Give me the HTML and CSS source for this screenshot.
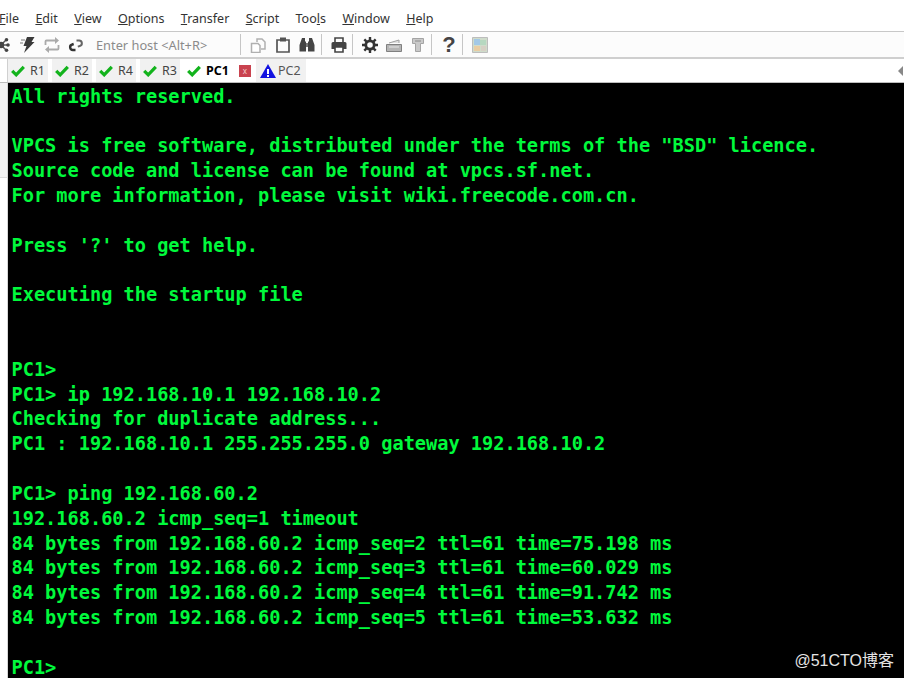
FILE: index.html
```html
<!DOCTYPE html>
<html lang="en">
<head>
<meta charset="utf-8">
<title>SecureCRT</title>
<link rel="stylesheet" href="styles.css">
</head>
<body>
<div class="app">
  <nav class="menubar">
    <span class="menu first"><u>F</u>ile</span>
    <span class="menu"><u>E</u>dit</span>
    <span class="menu"><u>V</u>iew</span>
    <span class="menu"><u>O</u>ptions</span>
    <span class="menu"><u>T</u>ransfer</span>
    <span class="menu"><u>S</u>cript</span>
    <span class="menu">Too<u>l</u>s</span>
    <span class="menu"><u>W</u>indow</span>
    <span class="menu"><u>H</u>elp</span>
  </nav>
  <div class="toolbar">
    <span class="tool tool-first"><svg class="ic" viewBox="0 0 16 16"><path d="M5 8h7M5 8l5-5M5 8l5 5" stroke="#555" stroke-width="1.500" fill="none"/><circle cx="5" cy="8" r="3.200" fill="#444"/><circle cx="10.500" cy="2.800" r="1.800" fill="#444"/><circle cx="12" cy="8" r="1.800" fill="#444"/><circle cx="10.500" cy="13.200" r="1.800" fill="#444"/></svg></span>
    <span class="tool"><svg class="ic" viewBox="0 0 16 16"><path d="M7 0h7.500l-3 5h3L4 16l2.500-7H3.500z" fill="#3a3a3a"/><path d="M1 3h4M0 6h3" stroke="#777"/></svg></span>
    <span class="tool"><svg class="ic ic-wide" viewBox="0 0 18 16"><path d="M2.500 8V4.500q0-1 1-1H13M15.500 8v3.500q0 1-1 1H5" fill="none" stroke="#aaa" stroke-width="1.800"/><path d="M12 0l4 3.500L12 7zM6 9l-4 3.500L6 16z" fill="#aaa"/></svg></span>
    <span class="tool"><svg class="ic" viewBox="0 0 16 16"><path d="M8.500 3.500H11a2.800 2.800 0 0 1 .8 5.500l-2 .6" fill="none" stroke="#666" stroke-width="2"/><path d="M7.500 13H5a2.800 2.800 0 0 1-.8-5.500l1.500-.5" fill="none" stroke="#333" stroke-width="2.400"/></svg></span>
    <span class="host">Enter host &lt;Alt+R&gt;</span>
    <i class="sep sep-host"></i>
    <span class="tool"><svg class="ic" viewBox="0 0 16 16"><path d="M7 5V2h5l3 3v7h-4" fill="none" stroke="#b0b0b0" stroke-width="1.500"/><path d="M1.500 6.500H8l2 2v7H1.500z" fill="#fff" stroke="#b0b0b0" stroke-width="1.500"/></svg></span>
    <span class="tool tool-paste"><svg class="ic" viewBox="0 0 16 16"><path d="M2 3h12v12H2z" fill="none" stroke="#555" stroke-width="1.700"/><path d="M5 .5h6v4H5z" fill="#555"/></svg></span>
    <span class="tool tool-find"><svg class="ic" viewBox="0 0 16 16"><path d="M3 1h3v3l1 1v9.500H.5V8zM10 1h3l2.500 7v6.500H9V5l1-1z" fill="#444"/><path d="M7 6h2v4H7z" fill="#777"/></svg></span>
    <i class="sep"></i>
    <span class="tool"><svg class="ic" viewBox="0 0 16 16"><path d="M4 5V1h8v4" fill="none" stroke="#444" stroke-width="1.600"/><path d="M2 5h12q1.500 0 1.500 1.500V12H12v-2H4v2H.5V6.500Q.5 5 2 5z" fill="#444"/><path d="M4 10h8v5H4z" fill="#fff" stroke="#444" stroke-width="1.600"/></svg></span>
    <i class="sep"></i>
    <span class="tool"><svg class="ic" viewBox="0 0 16 16"><circle cx="8" cy="8" r="4.200" fill="none" stroke="#333" stroke-width="2.800"/><path d="M8 0v3M8 13v3M0 8h3M13 8h3M2.300 2.300l2 2M11.700 11.700l2 2M13.700 2.300l-2 2M4.300 11.700l-2 2" stroke="#333" stroke-width="2.400"/></svg></span>
    <span class="tool"><svg class="ic" viewBox="0 0 16 16"><path d="M.5 7.500h15v7H.5z" fill="#b5b5b5" stroke="#808080"/><path d="M3 6l10-3v3" fill="#e2e2e2" stroke="#a0a0a0"/><path d="M3 10h10" stroke="#e8e8e8"/></svg></span>
    <span class="tool"><svg class="ic ic-narrow" viewBox="0 0 14 16"><path d="M1.500 1.500h11v5h-3v8h-5v-8h-3z" fill="#c9c9c9" stroke="#a4a4a4"/><path d="M4 4h6" stroke="#8c8c8c"/></svg></span>
    <i class="sep"></i>
    <span class="tool help">?</span>
    <i class="sep"></i>
    <span class="tool"><svg class="ic" viewBox="0 0 16 16"><path d="M.5.5h15v15H.5z" fill="#cfdccb" stroke="#bdbdbd"/><path d="M2 2h6v6H2z" fill="#a3c8e6"/><path d="M8 3h6v5H8z" fill="#b6d8c0"/><path d="M2 9h6v5H2z" fill="#e9cda3"/><path d="M9 9h5v5H9z" fill="#d6d0c4"/></svg></span>
  </div>
  <div class="tabbar">
    <i class="tab-edge"></i>
    <div class="tab"><svg class="tick" viewBox="0 0 14 12"><path d="M1.200 5.800l4 4L12.800 1.800" fill="none" stroke="#12b31c" stroke-width="3.200"/></svg>R1</div>
    <div class="tab"><svg class="tick" viewBox="0 0 14 12"><path d="M1.200 5.800l4 4L12.800 1.800" fill="none" stroke="#12b31c" stroke-width="3.200"/></svg>R2</div>
    <div class="tab"><svg class="tick" viewBox="0 0 14 12"><path d="M1.200 5.800l4 4L12.800 1.800" fill="none" stroke="#12b31c" stroke-width="3.200"/></svg>R4</div>
    <div class="tab"><svg class="tick" viewBox="0 0 14 12"><path d="M1.200 5.800l4 4L12.800 1.800" fill="none" stroke="#12b31c" stroke-width="3.200"/></svg>R3</div>
    <div class="tab active"><svg class="tick" viewBox="0 0 14 12"><path d="M1.200 5.800l4 4L12.800 1.800" fill="none" stroke="#12b31c" stroke-width="3.200"/></svg>PC1<span class="close">x</span></div>
    <div class="tab warn"><svg class="tri" viewBox="0 0 16 14"><path d="M8 0l8 14H0z" fill="#1212e0"/><path d="M7 5h2v5H7zM7 11h2v2H7z" fill="#fff"/></svg>PC2</div>
    <svg class="scroll" viewBox="0 0 6 10"><path d="M5 0v10L0 5z" fill="#888"/></svg>
  </div>
  <div class="body">
    <div class="rail"><div class="rail-top"></div></div>
    <main class="terminal">
      <pre class="output">All rights reserved.

VPCS is free software, distributed under the terms of the "BSD" licence.
Source code and license can be found at vpcs.sf.net.
For more information, please visit wiki.freecode.com.cn.

Press '?' to get help.

Executing the startup file


PC1&gt;
PC1&gt; ip 192.168.10.1 192.168.10.2
Checking for duplicate address...
PC1 : 192.168.10.1 255.255.255.0 gateway 192.168.10.2

PC1&gt; ping 192.168.60.2
192.168.60.2 icmp_seq=1 timeout
84 bytes from 192.168.60.2 icmp_seq=2 ttl=61 time=75.198 ms
84 bytes from 192.168.60.2 icmp_seq=3 ttl=61 time=60.029 ms
84 bytes from 192.168.60.2 icmp_seq=4 ttl=61 time=91.742 ms
84 bytes from 192.168.60.2 icmp_seq=5 ttl=61 time=53.632 ms

PC1&gt;</pre>
      <span class="mark">@51CTO博客</span>
    </main>
  </div>
</div>
</body>
</html>
```
FILE: styles.css
```css
html, body {
  margin: 0;
  padding: 0;
  height: 678px;
  overflow: hidden;
  background: #fff;
}
.app {
  display: flex;
  flex-direction: column;
  height: 678px;
  font-family: "Noto Sans", "Liberation Sans", sans-serif;
  font-size: 12.500px;
}
.menubar {
  display: flex;
  flex: none;
  height: 32px;
  box-sizing: border-box;
  align-items: center;
  padding: 6px 0 0 0;
  gap: 16.400px;
  color: #333;
  border-bottom: 1px solid #c8c8c8;
}
.menu u { text-decoration-thickness: 1px; }
.menu.first { margin-left: -1px; }
.toolbar {
  display: flex;
  flex: none;
  align-items: center;
  height: 27px;
  box-sizing: border-box;
  border-bottom: 2px solid #cfcfcf;
  background: #fcfcfc;
}
.tool {
  display: flex;
  flex: none;
  align-items: center;
  justify-content: center;
  width: 24px;
  height: 20px;
}
.tool-first { margin-left: -8px; }
.tool-paste { margin-left: 1px; }
.tool-find { margin-right: 2px; }
.ic { flex: none; width: 16px; height: 16px; }
.ic-wide { width: 18px; }
.ic-narrow { width: 14px; }
.host {
  flex: none;
  margin-left: 8px;
  width: 144px;
  color: #8b8b8b;
  font-size: 12.800px;
  white-space: nowrap;
}
.sep { flex: none; width: 1px; height: 21px; background: #c6c6c6; margin-right: 5px; }
.tool + .sep { margin-left: 1px; }
.tool-find + .sep { margin-left: 0; }
.host + .sep { margin-left: 0; }
.help {
  font-family: "Liberation Sans", sans-serif;
  font-weight: 700;
  font-size: 22px;
  color: #444;
}
.tabbar {
  display: flex;
  flex: none;
  align-items: stretch;
  height: 24px;
  box-sizing: border-box;
  border-bottom: 1px solid #bdbdbd;
}
.tab-edge { flex: none; width: 1px; margin: 0 0 0 7px; background: #d0d0d0; }
.tab {
  display: flex;
  align-items: center;
  flex: none;
  padding-left: 3px;
  background: #f1f1f1;
  color: #444;
  width: 40px;
  box-sizing: border-box;
  margin-right: 4px;
}
.tick { width: 14px; height: 12px; margin-right: 5px; flex: none; }
.tab.active {
  background: #fff;
  color: #000;
  font-weight: 700;
  width: 70px;
  margin-right: 2px;
}
.close {
  width: 12px;
  height: 12px;
  margin-left: 10px;
  background: #c9434f;
  color: #f5d0d0;
  font-size: 8px;
  line-height: 11px;
  text-align: center;
  flex: none;
  font-weight: 400;
}
.tab.warn { width: 50px; margin-right: 0; padding-left: 4px; color: #555; }
.tri { width: 16px; height: 14px; margin-right: 2px; flex: none; }
.scroll { width: 6px; height: 10px; margin: 7px 0 0 auto; flex: none; }
.body { display: flex; flex: 1; min-height: 0; }
.rail {
  flex: none;
  width: 8px;
  box-sizing: border-box;
  border-right: 1px solid #d6d6d6;
}
.rail-top { height: 94px; background: #f3f3f3; border-bottom: 1px solid #dcdcdc; }
.terminal {
  position: relative;
  flex: 1;
  min-width: 0;
  background: #000;
  overflow: hidden;
}
.output {
  margin: 0;
  padding: 1.600px 0 0 3.500px;
  font-family: "DejaVu Sans Mono", "Liberation Mono", monospace;
  font-weight: 700;
  font-size: 18.630px;
  line-height: 24.830px;
  color: #00fa3c;
}
.mark {
  position: absolute;
  right: 10px;
  bottom: 8px;
  color: #e4e4e4;
  font-family: "Liberation Sans", "Noto Sans CJK SC", sans-serif;
  font-size: 16px;
  line-height: 18px;
}
```
